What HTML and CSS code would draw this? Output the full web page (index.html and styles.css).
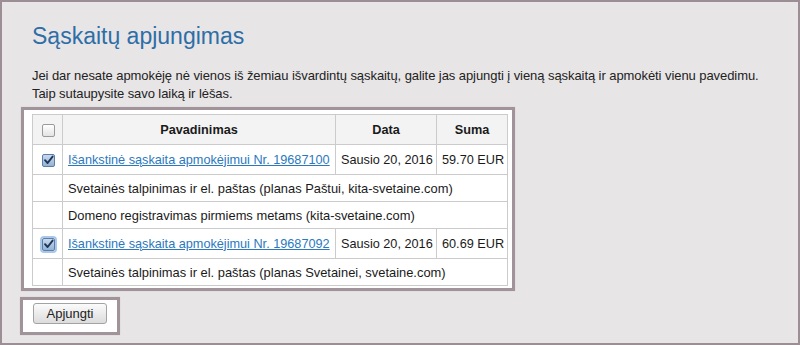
FILE: index.html
```html
<!DOCTYPE html>
<html lang="lt">
<head>
<meta charset="utf-8">
<link rel="stylesheet" href="styles.css">
</head>
<body>
<div class="frame">
  <h1 class="title">Sąskaitų apjungimas</h1>
  <p class="intro">Jei dar nesate apmokėję nė vienos iš žemiau išvardintų sąskaitų, galite jas apjungti į vieną sąskaitą ir apmokėti vienu pavedimu.<br>Taip sutaupysite savo laiką ir lėšas.</p>
  <div class="hl table-box">
    <table class="inv">
      <colgroup><col class="c-chk"><col class="c-name"><col class="c-date"><col class="c-sum"></colgroup>
      <tr class="r-head">
        <th class="chk"><span class="cb"></span></th>
        <th>Pavadinimas</th>
        <th>Data</th>
        <th>Suma</th>
      </tr>
      <tr class="r-main">
        <td class="chk"><span class="cb on"><svg viewBox="0 0 13 13" width="13" height="13"><path d="M3 6.2 L5.6 9 L10.6 2.6" fill="none" stroke="#1d3657" stroke-width="1.9" stroke-linecap="round" stroke-linejoin="round"/></svg></span></td>
        <td><a href="#">Išankstinė sąskaita apmokėjimui Nr. 19687100</a></td>
        <td>Sausio 20, 2016</td>
        <td>59.70 EUR</td>
      </tr>
      <tr class="r-sub">
        <td class="chk"></td>
        <td colspan="3">Svetainės talpinimas ir el. paštas (planas Paštui, kita-svetaine.com)</td>
      </tr>
      <tr class="r-sub">
        <td class="chk"></td>
        <td colspan="3">Domeno registravimas pirmiems metams (kita-svetaine.com)</td>
      </tr>
      <tr class="r-main">
        <td class="chk"><span class="cb on focus"><svg viewBox="0 0 13 13" width="13" height="13"><path d="M3 6.2 L5.6 9 L10.6 2.6" fill="none" stroke="#1d3657" stroke-width="1.9" stroke-linecap="round" stroke-linejoin="round"/></svg></span></td>
        <td><a href="#">Išankstinė sąskaita apmokėjimui Nr. 19687092</a></td>
        <td>Sausio 20, 2016</td>
        <td>60.69 EUR</td>
      </tr>
      <tr class="r-sub">
        <td class="chk"></td>
        <td colspan="3">Svetainės talpinimas ir el. paštas (planas Svetainei, svetaine.com)</td>
      </tr>
    </table>
  </div>
  <div class="hl btn-box">
    <button class="btn" type="button">Apjungti</button>
  </div>
</div>
</body>
</html>
```

FILE: styles.css
```css
html, body {
  margin: 0;
  padding: 0;
}
body {
  font-family: "Liberation Sans", Arial, sans-serif;
  color: #1a1a1a;
}
.frame {
  box-sizing: border-box;
  width: 800px;
  height: 345px;
  border: 2px solid #9b8e95;
  background: #e8e5e6;
  padding: 20px 0 0 19px;
  overflow: hidden;
}
.title {
  margin: 0 0 17px 11px;
  font-size: 23px;
  line-height: 28px;
  font-weight: normal;
  color: #2d6ea6;
}
.intro {
  margin: 0 0 4px 11px;
  font-size: 13px;
  line-height: 18px;
  letter-spacing: -0.07px;
  color: #222;
}
.hl {
  border: 3px solid #a0939a;
  background: #fff;
  box-shadow: 0 0 1px #c9c0c4;
}
.table-box {
  display: inline-block;
  padding: 4px 4px 2px 8px;
}
.btn-box {
  display: block;
  box-sizing: content-box;
  padding: 3px 0 8px 0;
  margin-top: 2px;
  margin-left: -1px;
  width: 94px;
}
.inv {
  border-collapse: collapse;
  width: 475px;
  table-layout: fixed;
  font-size: 12.7px;
}
.c-chk { width: 30px; }
.c-name { width: 273px; }
.c-date { width: 101px; }
.c-sum { width: 71px; }
.inv th, .inv td {
  border: 1px solid #cbcbcb;
  padding: 0 5px;
  vertical-align: middle;
  white-space: nowrap;
  text-align: left;
}
.inv th {
  background: #f3f3f3;
  font-weight: bold;
  text-align: center;
}
.inv .chk {
  padding: 0;
  text-align: center;
}
.r-head { height: 30px; }
.r-main { height: 30px; }
.r-sub { height: 27px; }
.r-sub td { font-size: 12.9px; }
.inv a {
  color: #2a79be;
  text-decoration: underline;
}
.cb {
  display: inline-block;
  box-sizing: border-box;
  width: 13px;
  height: 13px;
  border: 1px solid #9a9a9a;
  border-radius: 2px;
  background: linear-gradient(#ffffff, #e3e3e3);
  vertical-align: middle;
  position: relative;
  left: 1px;
}
.cb svg {
  position: absolute;
  left: -1px;
  top: -1px;
}
.cb.on {
  border-color: #5c7ea6;
  background: linear-gradient(#c9d9ec, #94b2d6);
}
.cb.focus {
  box-shadow: 0 0 0 2px #a8c7ea;
}
.btn {
  display: block;
  margin-left: 10px;
  width: 74px;
  height: 21px;
  padding: 0;
  font-family: "Liberation Sans", Arial, sans-serif;
  font-size: 13px;
  color: #222;
  border: 1px solid #a3a3a3;
  border-radius: 3px;
  background: linear-gradient(#fbfbfb, #dcdcdc);
}
```
